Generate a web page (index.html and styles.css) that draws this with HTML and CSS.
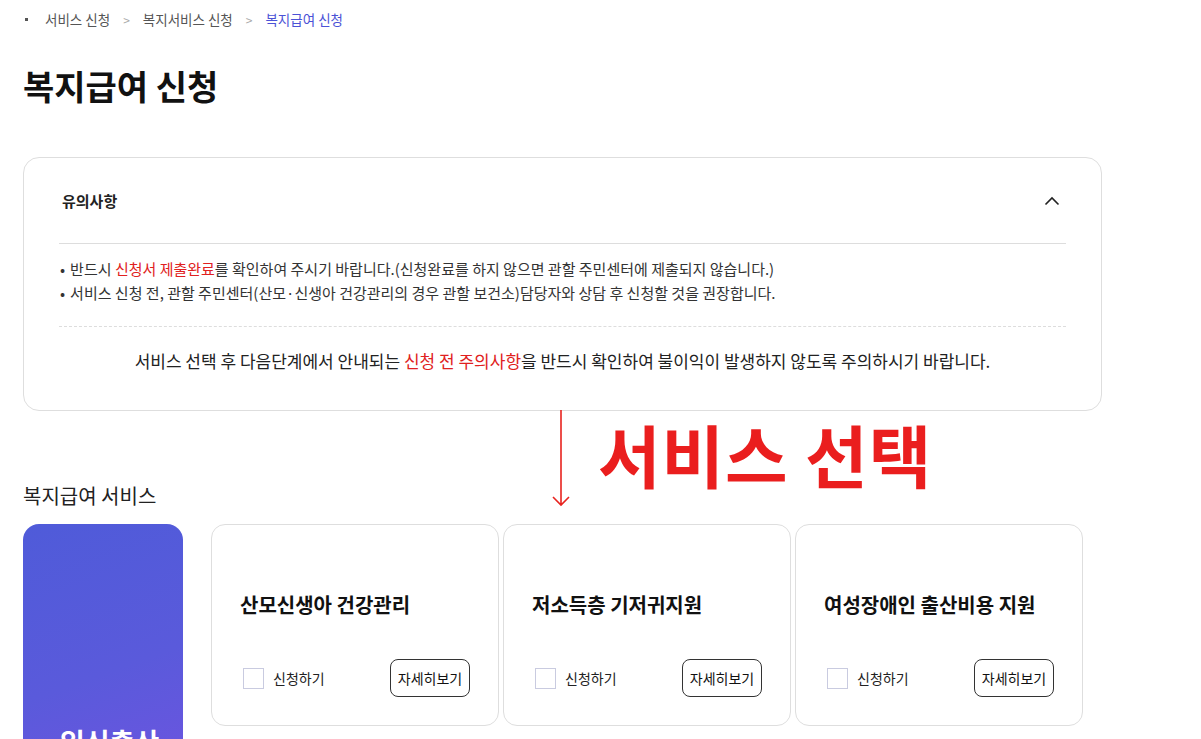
FILE: index.html
```html
<html>
    <head>
        <title>복지급여 신청</title>

        <link rel="stylesheet" href="styles.css">
    </head>
    <body>
        <div id="page">
            <!-- breadcrumb -->
            <div class="breadcrumb">
                <span class="homeDot"></span>
                <span class="crumb">서비스 신청</span>
                <span class="sep">&gt;</span>
                <span class="crumb">복지서비스 신청</span>
                <span class="sep">&gt;</span>
                <span class="crumb current">복지급여 신청</span>
            </div>

            <h1 class="pageTitle">복지급여 신청</h1>

            <!-- notice box -->
            <div class="notice">
                <div class="noticeHead">
                    <span>유의사항</span>
                    <svg width="16" height="10" viewBox="0 0 16 10"><path d="M1.5 8.5 L8 2 L14.5 8.5" fill="none" stroke="#222" stroke-width="1.6"/></svg>
                </div>
                <ul class="noticeList">
                    <li>반드시 <em>신청서 제출완료</em>를 확인하여 주시기 바랍니다.(신청완료를 하지 않으면 관할 주민센터에 제출되지 않습니다.)</li>
                    <li>서비스 신청 전, 관할 주민센터(산모·신생아 건강관리의 경우 관할 보건소)담당자와 상담 후 신청할 것을 권장합니다.</li>
                </ul>
                <p class="noticeFoot">서비스 선택 후 다음단계에서 안내되는 <em>신청 전 주의사항</em>을 반드시 확인하여 불이익이 발생하지 않도록 주의하시기 바랍니다.</p>
            </div>

            <h2 class="sectionTitle">복지급여 서비스</h2>

            <div class="serviceRow">
                <div class="categoryCard">임신출산</div>

                <div class="serviceCard">
                    <div class="serviceName">산모신생아 건강관리</div>
                    <div class="serviceActions">
                        <label class="applyCheck"><span class="box"></span>신청하기</label>
                        <button class="detailBtn">자세히보기</button>
                    </div>
                </div>
                <div class="serviceCard">
                    <div class="serviceName">저소득층 기저귀지원</div>
                    <div class="serviceActions">
                        <label class="applyCheck"><span class="box"></span>신청하기</label>
                        <button class="detailBtn">자세히보기</button>
                    </div>
                </div>
                <div class="serviceCard">
                    <div class="serviceName">여성장애인 출산비용 지원</div>
                    <div class="serviceActions">
                        <label class="applyCheck"><span class="box"></span>신청하기</label>
                        <button class="detailBtn">자세히보기</button>
                    </div>
                </div>
            </div>

            <!-- red annotation over the page -->
            <svg class="annoArrow" width="20" height="98" viewBox="0 0 20 98"><path d="M10 0 V95 M2 87 L10 95 L18 87" fill="none" stroke="#e8231f" stroke-width="1.6"/></svg>
            <div class="annoText">서비스 선택</div>
        </div>
    </body>
</html>
```

FILE: styles.css
```css
body{
    margin: 0;
    background: white;
    color: #222;
    font-family: "Noto Sans CJK KR", "Noto Sans", sans-serif;
    overflow: hidden;
}

#page{
    position: relative;
    width: 1079px;
    padding: 10px 0 0 23px;
}

.breadcrumb{
    display: flex;
    align-items: center;
    height: 18px;
    font-size: 13.5px;
    color: #555;
}

.homeDot{
    width: 3px;
    height: 3px;
    background: #555;
    margin: 0 17px 0 2px;
}

.sep{
    color: #aaa;
    font-size: 12px;
    margin: 0 13px;
}

.current{
    color: #4b52d6;
}

.pageTitle{
    margin: 38px 0 0 0;
    font-size: 34px;
    line-height: 40px;
    font-weight: 700;
    color: #111;
}

.notice{
    margin-top: 51px;
    border: 1px solid #dedede;
    border-radius: 16px;
    padding: 0 35px;
    height: 252px;
}

.noticeHead{
    display: flex;
    justify-content: space-between;
    align-items: center;
    height: 85px;
    padding: 0 3px;
    border-bottom: 1px solid #ddd;
    font-size: 15px;
    font-weight: 700;
    color: #222;
}

.noticeHead svg{
    margin-right: 3px;
}

.noticeList{
    list-style: none;
    margin: 0;
    padding: 13px 0 21px 0;
    font-size: 15px;
    line-height: 24px;
    color: #333;
    border-bottom: 1px dashed #ddd;
}

.noticeList li::before{
    content: "•";
    margin: 0 5px 0 1px;
}

em{
    font-style: normal;
    color: #e02020;
}

.noticeFoot{
    margin: 0;
    padding-top: 22px;
    text-align: center;
    font-size: 17px;
    line-height: 24px;
    color: #222;
}

.sectionTitle{
    margin: 72px 0 0 0;
    font-size: 20px;
    line-height: 26px;
    font-weight: 400;
    color: #222;
}

.serviceRow{
    display: flex;
    margin-top: 15px;
}

.categoryCard{
    width: 160px;
    height: 240px;
    margin-right: 28px;
    border-radius: 16px 16px 0 0;
    background: linear-gradient(160deg, #4f5bd9 0%, #5a5adb 60%, #6a55df 100%);
    color: white;
    font-size: 27px;
    font-weight: 700;
    padding-top: 198px;
    padding-left: 37px;
    box-sizing: border-box;
}

.serviceCard{
    width: 288px;
    height: 202px;
    margin-right: 4px;
    border: 1px solid #dedede;
    border-radius: 14px;
    padding: 61px 28px 0 28px;
    box-sizing: border-box;
}

.serviceName{
    font-size: 20px;
    line-height: 38px;
    font-weight: 700;
    color: #111;
}

.serviceActions{
    display: flex;
    justify-content: space-between;
    align-items: center;
    margin-top: 35px;
}

.applyCheck{
    display: flex;
    align-items: center;
    font-size: 14px;
    color: #222;
    padding-left: 3px;
}

.box{
    width: 19px;
    height: 19px;
    border: 1px solid #c9cbe0;
    margin-right: 9px;
}

.detailBtn{
    width: 80px;
    height: 38px;
    border: 1px solid #333;
    border-radius: 8px;
    background: white;
    font-family: inherit;
    font-size: 14px;
    color: #111;
    padding: 0;
}

.annoArrow{
    position: absolute;
    left: 551px;
    top: 410px;
}

.annoText{
    position: absolute;
    left: 598px;
    top: 409px;
    font-size: 68px;
    line-height: 90px;
    font-weight: 700;
    color: #ea1e1e;
    letter-spacing: 1px;
}
```
